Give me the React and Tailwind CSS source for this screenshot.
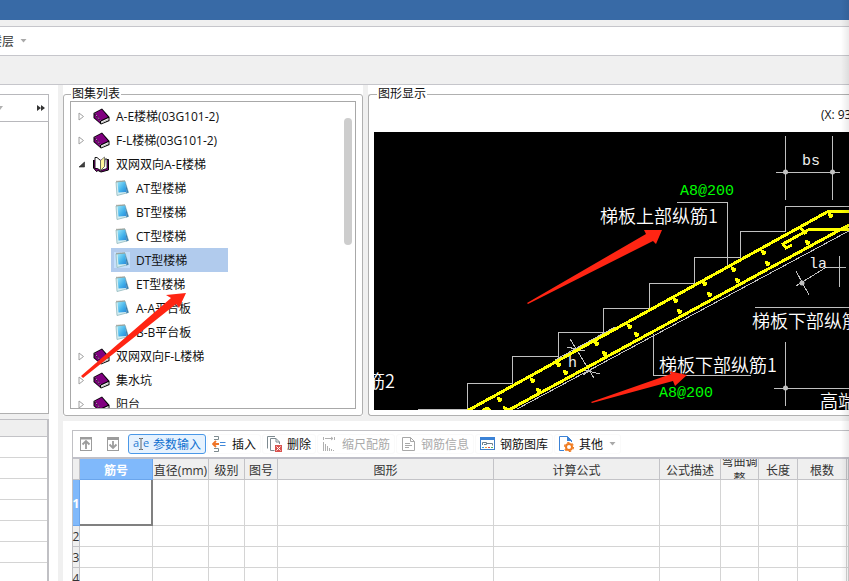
import React, { useState } from 'react';
import clsx from 'clsx';

const BookIcon = () => (
  <svg width="17" height="17" viewBox="0 0 17 17" className="shrink-0">
    <path d="M0.500 5 L9 0.500 L16.500 9 L16.500 13 L8 16.500 L0.500 10 Z" fill="#000" />
    <path d="M2 5 L8.800 1.600 L15 9 L7.500 12.500 Z" fill="#800080" />
    <path d="M1.500 6 L7 13 L7 15 L1.500 9.500 Z" fill="#800080" />
    <path d="M8 13.500 L15.500 10 L15.500 12.300 L8.300 15.500 Z" fill="#fff" />
    <path d="M2 5.500 L7.500 13" stroke="#e0b0e0" strokeWidth="1" strokeDasharray="1 1" />
    <path d="M9 14.500 L15 11.700" stroke="#999" strokeWidth="0.700" />
  </svg>
);

const OpenBookIcon = () => (
  <svg width="17" height="17" viewBox="0 0 17 17" className="shrink-0">
    <path d="M0.500 4 V12 L3.500 15.500 L5 14.500 L8 16 L15.500 14 V3.500 H13" fill="#800080" stroke="#000" />
    <path d="M2 1.500 H4 L7.500 4.500 V14.500 L4.500 12.500 H2 Z" fill="#fff" stroke="#000" strokeWidth="0.900" />
    <path d="M12 3 H14 V12.500 L7.500 14.500 L11.500 10.500 Z" fill="#fff" stroke="#000" strokeWidth="0.800" />
    <path d="M7.500 4.500 L11.500 1 V10.500 L7.500 14.500 Z" fill="#fff59a" stroke="#666" strokeWidth="0.800" />
  </svg>
);

const NoteIcon = ({ active }) => (
  <svg width="16" height="16" viewBox="0 0 16 16" className={clsx('shrink-0', active && 'bg-[#c5dffb]')}>
    <defs>
      <linearGradient id="note" x1="0" y1="0" x2="1" y2="1">
        <stop offset="0" stopColor="#9be6f8" />
        <stop offset="0.600" stopColor="#3fb0ea" />
        <stop offset="1" stopColor="#2b86d6" />
      </linearGradient>
    </defs>
    <path d="M2 2 L11 1 L14.500 12.500 L3 15.500 Z" fill="#d6eef2" stroke="#8fb7bd" strokeWidth="0.800" />
    <path d="M3.500 2 L11 1.500 L12.500 12 L4.500 12.500 Z" fill="url(#note)" />
    <path d="M11 1.500 L14.500 12.500 L12 13.500 L12.500 12 Z" fill="#3b7fae" />
    <path d="M2.500 1.500 L11 1" stroke="#8a8170" strokeWidth="1.500" strokeDasharray="1 1" />
  </svg>
);

const Caret = () => (
  <svg width="7" height="4" viewBox="0 0 7 4" className="shrink-0">
    <path d="M0.500 0 L6.500 0 L3.500 3.500 Z" fill="#a9a9a9" />
  </svg>
);

const TreeArrow = ({ open }) => (
  <svg width="7" height="9" viewBox="0 0 7 9" className="shrink-0">
    {open ? (
      <path d="M6.500 2 L6.500 7 L1 7 Z" fill="#404040" stroke="#222" strokeWidth="0.600" />
    ) : (
      <path d="M1 1 L5.500 4.500 L1 8 Z" fill="#fff" stroke="#a0a0a0" />
    )}
  </svg>
);

const MoveIcon = ({ down }) => (
  <svg width="12" height="14" viewBox="0 0 12 14" fill="none" stroke="#9c9c9c">
    <rect x="0.500" y="0.500" width="11" height="13" />
    {down ? (
      <path d="M1 2 H11 M6 4 V11 M2.500 7.500 L6 11 L9.500 7.500" strokeWidth="1.800" />
    ) : (
      <path d="M6 12 V4 M2.500 7.500 L6 4 L9.500 7.500 M1 1.500 H11" strokeWidth="1.800" />
    )}
  </svg>
);

const ParamIcon = () => (
  <svg width="16" height="16" viewBox="0 0 16 16" className="shrink-0">
    <g fontSize="11" fontFamily="'Open Sans', 'Noto Sans', sans-serif" fill="#2b7cd0">
      <text x="0" y="11">a</text>
      <text x="10" y="11">e</text>
    </g>
    <path d="M6 2.500 H7.500 L8 3 L8.500 2.500 H10 M8 3 V13 M6 13.500 H7.500 L8 13 L8.500 13.500 H10" fill="none" stroke="#555" strokeWidth="0.900" />
  </svg>
);

const InsertIcon = () => (
  <svg width="16" height="16" viewBox="0 0 16 16" className="shrink-0" fill="none">
    <path d="M2 0.500 H6.500 V3.500 H2 M2 12.500 H6.500 V15.500 H2" stroke="#7d8a8f" />
    <path d="M7 8 H1.500 M4 5 L1 8 L4 11" stroke="#ef7427" strokeWidth="1.800" />
    <path d="M8 6.500 H13.500 M8 9.500 H13.500" stroke="#3f87d9" />
  </svg>
);

const DeleteIcon = () => (
  <svg width="16" height="16" viewBox="0 0 16 16" className="shrink-0" fill="none">
    <path d="M0.500 12.500 V0.500 H8" stroke="#7d8a90" />
    <path d="M7.500 14.500 H3.500 V2.500 H9 L12.500 6 V8 M9 2.500 V6 H12.500" stroke="#7d8a90" />
    <rect x="8" y="9" width="7" height="7" fill="#d9534f" />
    <path d="M9.500 10.500 L13.500 14.500 M13.500 10.500 L9.500 14.500" stroke="#fff" />
  </svg>
);

const ScaleIcon = () => (
  <svg width="16" height="16" viewBox="0 0 16 16" className="shrink-0" fill="none" stroke="#b0b0b0">
    <path d="M1.500 1 V4 M12.500 1 V4 M3 2.500 H11 M9 1 L11 2.500 L9 4" />
    <path d="M1.500 6 V15 M3.500 8 V15 M5.500 10 V15 M7.500 12 V15 M9.500 13 V15 M11.500 14 V15" />
  </svg>
);

const InfoIcon = () => (
  <svg width="16" height="16" viewBox="0 0 16 16" className="shrink-0" fill="none" stroke="#a8a8a8">
    <path d="M1.500 1.500 H9.500 L13.500 5.500 V14.500 H1.500 Z M9.500 1.500 V5.500 H13.500" />
    <path d="M4 7.500 H9 M4 9.500 H11 M4 11.500 H8" />
  </svg>
);

const LibraryIcon = () => (
  <svg width="16" height="16" viewBox="0 0 16 16" className="shrink-0" fill="none">
    <rect x="0.500" y="1.500" width="14" height="12" stroke="#3f7fc8" />
    <rect x="0" y="1" width="15" height="3" fill="#3b82d6" />
    <path d="M2.500 9 V6.500 H6.500 V8.500 H4 M7 7.500 H12.500 V9.500" stroke="#6d7f8c" />
    <path d="M2 11.500 H4" stroke="#3b9ad6" />
    <path d="M5 11.500 H7" stroke="#f0a030" />
    <path d="M8 11.500 H10" stroke="#e05050" />
    <path d="M11 11.500 H13" stroke="#58b060" />
  </svg>
);

const OtherIcon = () => (
  <svg width="16" height="16" viewBox="0 0 16 16" className="shrink-0" fill="none">
    <path d="M5 14.500 H0.500 V0.500 H8.500 L12.500 4.500 V6" stroke="#3b82d6" />
    <path d="M8 0 L13 5 H8 Z" fill="#3b82d6" />
    <circle cx="10" cy="11" r="3" stroke="#f07c22" strokeWidth="2" />
    <circle cx="10" cy="11" r="4.500" stroke="#f07c22" strokeWidth="1.200" strokeDasharray="2.400 2.300" />
  </svg>
);

const groups = [
  { name: 'A-E楼梯(03G101-2)' },
  { name: 'F-L楼梯(03G101-2)' },
  {
    name: '双网双向A-E楼梯',
    children: ['AT型楼梯', 'BT型楼梯', 'CT型楼梯', 'DT型楼梯', 'ET型楼梯', 'A-A平台板', 'B-B平台板'],
  },
  { name: '双网双向F-L楼梯' },
  { name: '集水坑' },
  { name: '阳台' },
];

const tools = [
  { label: '参数输入', icon: <ParamIcon />, active: true },
  { label: '插入', icon: <InsertIcon /> },
  { label: '删除', icon: <DeleteIcon /> },
  { label: '缩尺配筋', icon: <ScaleIcon />, disabled: true },
  { label: '钢筋信息', icon: <InfoIcon />, disabled: true },
  { label: '钢筋图库', icon: <LibraryIcon /> },
  { label: '其他', icon: <OtherIcon />, menu: true },
];

const columns = [
  { label: '筋号', width: 'w-[73px]' },
  { label: '直径(mm)', width: 'w-14' },
  { label: '级别', width: 'w-9' },
  { label: '图号', width: 'w-[33px]' },
  { label: '图形', width: 'w-[216px]' },
  { label: '计算公式', width: 'w-[166px]' },
  { label: '公式描述', width: 'w-[61px]' },
  { label: '弯曲调整', width: 'w-[38px]' },
  { label: '长度', width: 'w-[39px]' },
  { label: '根数', width: 'w-[49px]' },
  { label: '', width: 'w-auto' },
];

const AtlasTree = () => {
  const [selected, setSelected] = useState('DT型楼梯');
  return (
    <ul className="min-w-0 flex-1 overflow-hidden pt-0.5">
      {groups.map((group) => (
        <li key={group.name}>
          <button type="button" className="flex h-6 items-center whitespace-nowrap pl-[7px]">
            <TreeArrow open={Boolean(group.children)} />
            <span className="ml-2 mr-[6px]">{group.children ? <OpenBookIcon /> : <BookIcon />}</span>
            <span className="pt-0.5">{group.name}</span>
          </button>
          {group.children && (
            <ul className="pl-10">
              {group.children.map((name) => (
                <li key={name}>
                  <button
                    type="button"
                    onClick={() => setSelected(name)}
                    className={clsx(
                      'flex h-6 w-[117px] items-center gap-[6px] whitespace-nowrap pl-[3px]',
                      selected === name && 'bg-[#b1cbed]'
                    )}
                  >
                    <NoteIcon active={selected === name} />
                    <span className="pt-0.5">{name}</span>
                  </button>
                </li>
              ))}
            </ul>
          )}
        </li>
      ))}
    </ul>
  );
};

// rebar cross-sections between the two main bars
const bars = [
  [499, 399], [532, 380], [538, 390], [558, 364], [565, 372], [596, 343], [604, 353],
  [629, 326], [636, 334], [675, 300], [679, 311], [704, 283], [709, 294], [733, 269],
  [737, 280], [763, 252], [767, 263], [807, 242], [830, 215],
];

const StairDrawing = () => (
  <svg className="block min-h-0 w-full flex-1 bg-black">
    <g transform="translate(-374 -132)" fill="none">
      <g stroke="#c0c0c0" shapeRendering="crispEdges">
        <path d="M418 409.500 H467.500 V383.500 H512.500 V356.500 H558.500 V332.500 H603.500 V308.500 H649.500 V283.500 H694.500 V257.500 H740.500 V231.500 H785.500 V206.500 H860" />
        <path d="M785.500 136 V200 M832.500 136 V200 M776 172.500 H840" />
        <path d="M677 202.500 H727.500 V267" />
        <path d="M653.500 334 V375.500 H751" />
        <path d="M755 307.500 H860 M785.500 342 V406 M774 388.500 H860" />
        <path d="M825 267.500 H846 M839.500 256 V287" />
        <path d="M517 409 L860 225" />
        <path d="M555 360 L615 327" />
        <path d="M825 268 L796 286 M796 271 L809 295" />
        <path d="M570 339 L594 378 M567 347 L585 351 M569 354 L583 346 M580 369 L600 374 M583 375 L597 366" />
      </g>
      <g fill="#c0c0c0">
        <circle cx="785.500" cy="172" r="2.500" />
        <circle cx="832.500" cy="172" r="2.500" />
        <circle cx="785.500" cy="388" r="2.500" />
        <circle cx="802" cy="283" r="2.500" />
      </g>
      <g stroke="#ffff00" strokeWidth="3" shapeRendering="crispEdges">
        <path d="M467 411 L828 211.500 H860" />
        <path d="M507 411 L860 219" />
        <path d="M860 229.500 H809 L783 244 L786 248 L792 245" />
        <path d="M800 227 L806 234" />
        <path d="M482 411 L487 408 L491 411 M503 407 L510 411" />
      </g>
      <g fill="#ffff00" shapeRendering="crispEdges">
        {bars.map(([x, y]) => (
          <path key={`${x}-${y}`} d={`M${x - 2} ${y - 2} h3 v1 h2 v3 h-1 v1 h-3 v-2 h-1 z`} />
        ))}
      </g>
      <g fontFamily="'Liberation Mono', 'Noto Sans CJK SC', monospace" fontSize="15" fill="#f0f0f0">
        <text x="802" y="165">bs</text>
        <text x="568" y="367">h</text>
        <text x="809" y="268">la</text>
        <text x="680" y="195" fill="#00ff00">A8@200</text>
        <text x="659" y="397" fill="#00ff00">A8@200</text>
      </g>
      <g fontFamily="'Noto Sans CJK SC', sans-serif" fontSize="18" fontWeight="350" fill="#fff">
        <text x="600" y="223">梯板上部纵筋1</text>
        <text x="659" y="372">梯板下部纵筋1</text>
        <text x="752" y="328">梯板下部纵筋2</text>
        <text x="820" y="408">高端</text>
        <text x="367" y="388">筋2</text>
      </g>
      <g fill="#ff2513">
        <path d="M527 303 L646 234 L644 230 L662 230 L656 244 L653 241 L528 304 Z" />
        <path d="M591 402 L671 374 L669 371 L687 375 L675 386 L673 381 L592 403 Z" />
      </g>
    </g>
  </svg>
);

const RebarTable = () => (
  <table className="w-full table-fixed border-separate border-spacing-0 text-[#333]">
    <thead>
      <tr>
        <th className="h-[21px] w-[7px] border-b border-r border-[#c3c3c7] bg-[#efefef] p-0" />
        {columns.map((col, i) => (
          <th
            key={col.width + col.label}
            className={clsx(
              'h-[21px] border-b border-r p-0',
              col.width,
              i === 0 ? 'border-[#6aa5ec] bg-[#80b9fb] font-bold text-white' : 'border-[#c3c3c7] bg-[#efefef] font-normal'
            )}
          >
            <div
              className={clsx(
                'flex h-5 items-center justify-center overflow-hidden pt-0.5 text-center leading-[17px]',
                col.label !== '弯曲调整' && 'whitespace-nowrap'
              )}
            >
              {col.label}
            </div>
          </th>
        ))}
      </tr>
    </thead>
    <tbody>
      {[1, 2, 3, 4].map((row) => (
        <tr key={row}>
          <th
            className={clsx(
              'border-b border-r p-0',
              row === 1
                ? 'h-[46px] border-[#6aa5ec] bg-[#80b9fb] font-bold text-white'
                : 'h-[21px] border-[#c3c3c7] bg-[#efefef] font-normal'
            )}
          >
            <div className="flex justify-center pt-0.5 leading-4">{row}</div>
          </th>
          {columns.map((col, i) => (
            <td
              key={col.width + col.label}
              className={clsx(
                'p-0',
                row === 1 && i === 0 ? 'border-b-2 border-r-2 border-[#808080]' : 'border-b border-r border-[#d4d4d4]'
              )}
            />
          ))}
        </tr>
      ))}
    </tbody>
  </table>
);

const App = () => {
  return (
    <div className="relative flex h-screen flex-col overflow-hidden bg-white font-['Open_Sans','Noto_Sans_CJK_SC',sans-serif] text-xs text-[#111]">
      <div className="h-5 shrink-0 bg-[#386aa6]" />
      <div className="h-[6px] shrink-0 bg-[#f0f0f0]" />
      <nav className="flex h-[30px] shrink-0 items-center border-y border-[#c6c6cb]">
        <button type="button" className="-ml-[10px] flex items-center gap-[6px] text-[#333]">
          <span className="pt-0.5">楼层</span>
          <Caret />
        </button>
      </nav>
      <div className="h-[29px] shrink-0 border-b border-[#c6c6cb] bg-[#f0f0f0]" />

      <div className="flex min-h-0 flex-1">
        {/* Side panel */}
        <aside className="flex w-[49px] shrink-0 flex-col pt-[9px]">
          <div className="flex h-7 shrink-0 items-center justify-between border-b border-r border-t border-[#b8b8bc] pr-[3px]">
            <svg width="4" height="4" viewBox="0 0 4 4">
              <path d="M0 0 H3 L0 4 Z" fill="#b0b0b0" />
            </svg>
            <svg width="8" height="6" viewBox="0 0 8 6">
              <path d="M0 0 L4 3 L0 6 Z M4 0 L8 3 L4 6 Z" fill="#333" />
            </svg>
          </div>
          <div className="h-[292px] shrink-0 border-b border-r border-[#b0b0b0]" />
          <div className="h-[5px] shrink-0 bg-[#f0f0f0]" />
          <div className="min-h-0 flex-1 overflow-hidden border-r-2 border-t border-[#c0c0c4]">
            <div className="h-[17px] border-b border-[#c3c3c7] bg-[#efefef]" />
            {[1, 2, 3, 4, 5, 6, 7].map((row) => (
              <div key={row} className="h-[21px] border-b border-[#d4d4d4]" />
            ))}
          </div>
        </aside>
        <div className="w-[9px] shrink-0" />
        <div className="w-[5px] shrink-0 bg-[#f0f0f0]" />

        <main className="flex min-w-0 flex-1 flex-col">
          <div className="flex h-[331px] shrink-0">
            {/* Atlas list */}
            <div className="w-[300px] shrink-0 pt-0.5">
              <fieldset className="flex h-full min-w-0 flex-col rounded-[3px] border border-[#b0b0b0] px-[6px] pb-[6px]">
                <legend className="ml-px px-px leading-[14px]">图集列表</legend>
                <div className="relative flex min-h-0 flex-1 border border-[#a8a8a8]">
                  <AtlasTree />
                  <div className="mr-[3px] mt-4 h-[127px] w-2 shrink-0 rounded-full bg-[#cdcdcd]" />
                  <svg className="pointer-events-none absolute left-0 top-0" width="120" height="280" viewBox="0 0 120 280">
                    <path d="M10 274 L100 196 L95 193 L115 191 L108 206 L105 202 L12 276 Z" fill="#ff2513" />
                  </svg>
                </div>
              </fieldset>
            </div>
            <div className="w-[5px] shrink-0 bg-[#f0f0f0]" />
            {/* Drawing view */}
            <div className="min-w-0 flex-1 pt-0.5">
              <fieldset className="flex h-full min-w-0 flex-col rounded-l-[3px] border border-r-0 border-[#b0b0b0] pb-[5px] pl-[5px]">
                <legend className="ml-[3px] px-px leading-[14px]">图形显示</legend>
                <div className="flex h-[31px] shrink-0 items-center justify-end overflow-hidden pb-1">
                  <span className="w-7 whitespace-nowrap">(X: 93</span>
                </div>
                <StairDrawing />
              </fieldset>
            </div>
          </div>
          <div className="h-[5px] shrink-0 bg-[#f0f0f0]" />

          {/* Rebar editor */}
          <section className="min-h-0 flex-1 overflow-hidden pl-[9px] pt-[9px]">
            <div className="border-l border-t border-[#c0c0c4]">
              <div className="flex h-7 items-center gap-px border-b-2 border-[#c0c0c8] pl-px">
                <button type="button" aria-label="上移" className="flex h-5 w-6 items-center justify-center">
                  <MoveIcon />
                </button>
                <button type="button" aria-label="下移" className="mx-0.5 flex h-5 w-6 items-center justify-center">
                  <MoveIcon down />
                </button>
                {tools.map((tool) => (
                  <button
                    key={tool.label}
                    type="button"
                    disabled={tool.disabled}
                    className={clsx(
                      'flex h-5 shrink-0 items-center gap-1 whitespace-nowrap rounded-[3px] border px-1',
                      tool.active ? 'border-[#4a98e8] bg-[#e6f2fe] text-[#1070d0]' : 'border-[#fafafa]',
                      tool.disabled && 'text-[#aaa]'
                    )}
                  >
                    {tool.icon}
                    <span className="pt-0.5">{tool.label}</span>
                    {tool.menu && <span className="ml-0.5"><Caret /></span>}
                  </button>
                ))}
              </div>
              <RebarTable />
            </div>
          </section>
        </main>
      </div>
      <div className="pointer-events-none absolute inset-y-0 right-0 w-2 bg-linear-to-r from-transparent to-black/8" />
    </div>
  );
};

export default App;
